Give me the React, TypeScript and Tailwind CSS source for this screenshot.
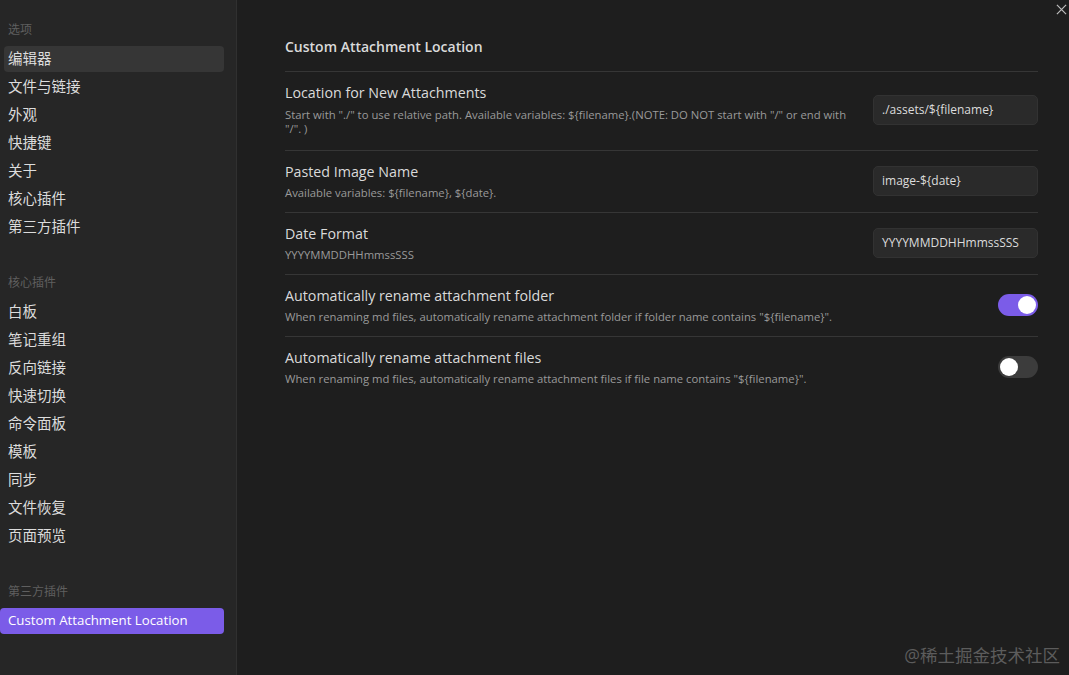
import React from "react";

const font = { fontFamily: '"Open Sans", "Noto Sans", "Noto Sans CJK SC", sans-serif' };

const Group = ({ title, items, active, accent }: { title: string; items: string[]; active?: string; accent?: boolean }) => (
  <div className="flex flex-col">
    <div className="h-[24px] pl-[8px] flex items-center text-[12px] text-[#5f5f5f]">{title}</div>
    <div className="flex flex-col gap-[2px] mt-[4px]">
      {items.map((it) => (
        <div
          key={it}
          className={
            "h-[26px] flex items-center rounded-[4px] " +
            (accent ? "text-[13.25px] pl-[8px] " : "text-[14.5px] ") +
            (it === active
              ? accent
                ? "bg-[#7b5ce8] text-white"
                : "bg-[#363636] text-[#dcdcdc] ml-[4px] pl-[4px]"
              : "text-[#dcdcdc] pl-[8px]")
          }
        >
          {it}
        </div>
      ))}
    </div>
  </div>
);

const Setting = ({ name, desc, children, tall }: { name: string; desc: React.ReactNode; children: React.ReactNode; tall?: boolean }) => (
  <div className={"flex items-center border-t border-[#363636] pt-[11px] gap-[20px] " + (tall ? "pb-[14px]" : "pb-[12px]")}>
    <div className="flex-1 flex flex-col">
      <div className="text-[14.25px] text-[#dadada] leading-[20px]">{name}</div>
      <div className={"text-[11.3px] text-[#9a9a9a] leading-[14px] " + (tall ? "mt-[5px]" : "mt-[4px]")}>{desc}</div>
    </div>
    {children}
  </div>
);

const Input = ({ value }: { value: string }) => (
  <div className="w-[165px] h-[30px] shrink-0 rounded-[5px] bg-[#2a2a2a] border border-[#323232] flex items-center px-[8px] text-[12px] text-[#dcdcdc]">
    {value}
  </div>
);

const Toggle = ({ on }: { on: boolean }) => (
  <div
    className={
      "w-[40px] h-[22px] shrink-0 rounded-full flex items-center px-[2px] " +
      (on ? "bg-[#7b5ce8] justify-end" : "bg-[#3c3c3c] justify-start")
    }
  >
    <div className="w-[18px] h-[18px] rounded-full bg-white" />
  </div>
);

export default function App() {
  return (
    <div className="w-[1069px] h-[675px] flex bg-[#1e1e1e] relative overflow-hidden" style={font}>
      <div className="w-[237px] h-full bg-[#262626] border-r border-[#303030] pt-[18px] pr-[12px] flex flex-col">
        <Group title="选项" items={["编辑器", "文件与链接", "外观", "快捷键", "关于", "核心插件", "第三方插件"]} active="编辑器" />
        <div className="h-[31px]" />
        <Group title="核心插件" items={["白板", "笔记重组", "反向链接", "快速切换", "命令面板", "模板", "同步", "文件恢复", "页面预览"]} />
        <div className="h-[31px]" />
        <Group title="第三方插件" items={["Custom Attachment Location"]} active="Custom Attachment Location" accent />
      </div>
      <div className="flex-1 pl-[48px] pr-[31px] pt-[37px]">
        <div className="text-[14px] font-semibold text-[#dadada] leading-[20px] pb-[14px]">Custom Attachment Location</div>
        <Setting
          tall
          name="Location for New Attachments"
          desc={<>Start with "./" to use relative path. Available variables: ${"{filename}"}.(NOTE: DO NOT start with "/" or end with "/". )</>}
        >
          <Input value="./assets/${filename}" />
        </Setting>
        <Setting name="Pasted Image Name" desc={<>Available variables: ${"{filename}"}, ${"{date}"}.</>}>
          <Input value="image-${date}" />
        </Setting>
        <Setting name="Date Format" desc="YYYYMMDDHHmmssSSS">
          <Input value="YYYYMMDDHHmmssSSS" />
        </Setting>
        <Setting
          name="Automatically rename attachment folder"
          desc={<>When renaming md files, automatically rename attachment folder if folder name contains "${"{filename}"}".</>}
        >
          <Toggle on />
        </Setting>
        <Setting
          name="Automatically rename attachment files"
          desc={<>When renaming md files, automatically rename attachment files if file name contains "${"{filename}"}".</>}
        >
          <Toggle on={false} />
        </Setting>
      </div>
      <div className="absolute top-[2px] right-[1px] w-[14px] h-[14px] flex items-center justify-center">
        <svg width="11" height="11" viewBox="0 0 12 12" stroke="#bdbdbd" strokeWidth="1.3" fill="none">
          <path d="M1 1 L11 11 M11 1 L1 11" />
        </svg>
      </div>
      <div className="absolute right-[9px] bottom-[7px] text-[17.5px] text-[#5c5c5c]">@稀土掘金技术社区</div>
    </div>
  );
}
